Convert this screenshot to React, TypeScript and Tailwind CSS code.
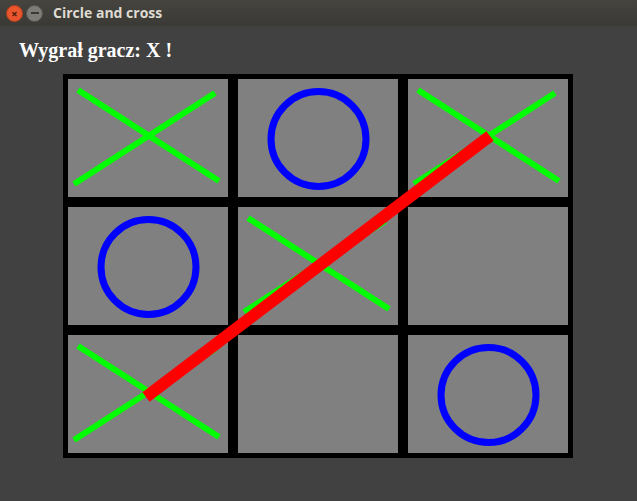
import React from 'react';

type Mark = 'X' | 'O' | null;

const board: Mark[] = ['X', 'O', 'X', 'O', 'X', null, 'X', null, 'O'];

const Cross = () => (
  <svg width="160" height="118" className="block">
    <line x1="10" y1="11" x2="151" y2="102" stroke="#00ff00" strokeWidth="6" />
    <line x1="6" y1="105" x2="147" y2="14" stroke="#00ff00" strokeWidth="6" />
  </svg>
);

const Circle = () => (
  <svg width="160" height="118" className="block">
    <circle cx="80.5" cy="60" r="47.5" fill="none" stroke="#0000ff" strokeWidth="7" />
  </svg>
);

export default function App() {
  return (
    <div className="w-[637px] h-[501px] flex flex-col bg-[#414141] overflow-hidden select-none">
      {/* Ubuntu title bar */}
      <div className="h-[26px] flex items-center bg-gradient-to-b from-[#45443f] to-[#3a3935] px-[6px]">
        <div className="w-[17px] h-[17px] rounded-full bg-[#e9552d] border border-[#b03c1c] flex items-center justify-center text-[#4a1a0a] text-[11px] leading-none font-bold">
          ×
        </div>
        <div className="ml-[3px] w-[17px] h-[17px] rounded-full bg-[#7d7c77] border border-[#55544f] flex items-center justify-center">
          <div className="w-[8px] h-[2px] bg-[#3a3935]" />
        </div>
        <span
          className="ml-[10px] text-[14px] font-bold text-[#dfdbd2] leading-none"
          style={{ fontFamily: '"Open Sans", "DejaVu Sans", sans-serif' }}
        >
          Circle and cross
        </span>
      </div>

      {/* Content */}
      <div className="flex-1 flex flex-col">
        <div
          className="mt-[12px] ml-[19px] h-[24px] text-[20px] font-bold text-white leading-[24px]"
          style={{ fontFamily: '"Liberation Serif", "DejaVu Serif", serif' }}
        >
          Wygrał gracz: X !
        </div>
        <div className="mt-[12px] ml-[63px] relative w-[510px] h-[384px] bg-black p-[5px] grid grid-cols-[160px_160px_160px] grid-rows-[118px_118px_118px] gap-[10px]">
          {board.map((m, i) => (
            <div key={i} className="bg-[#808080]">
              {m === 'X' && <Cross />}
              {m === 'O' && <Circle />}
            </div>
          ))}
          {/* winning line */}
          <svg className="absolute left-0 top-0 pointer-events-none" width="510" height="384">
            <line x1="83" y1="323" x2="427" y2="62" stroke="#ff0000" strokeWidth="12" />
          </svg>
        </div>
      </div>
    </div>
  );
}
